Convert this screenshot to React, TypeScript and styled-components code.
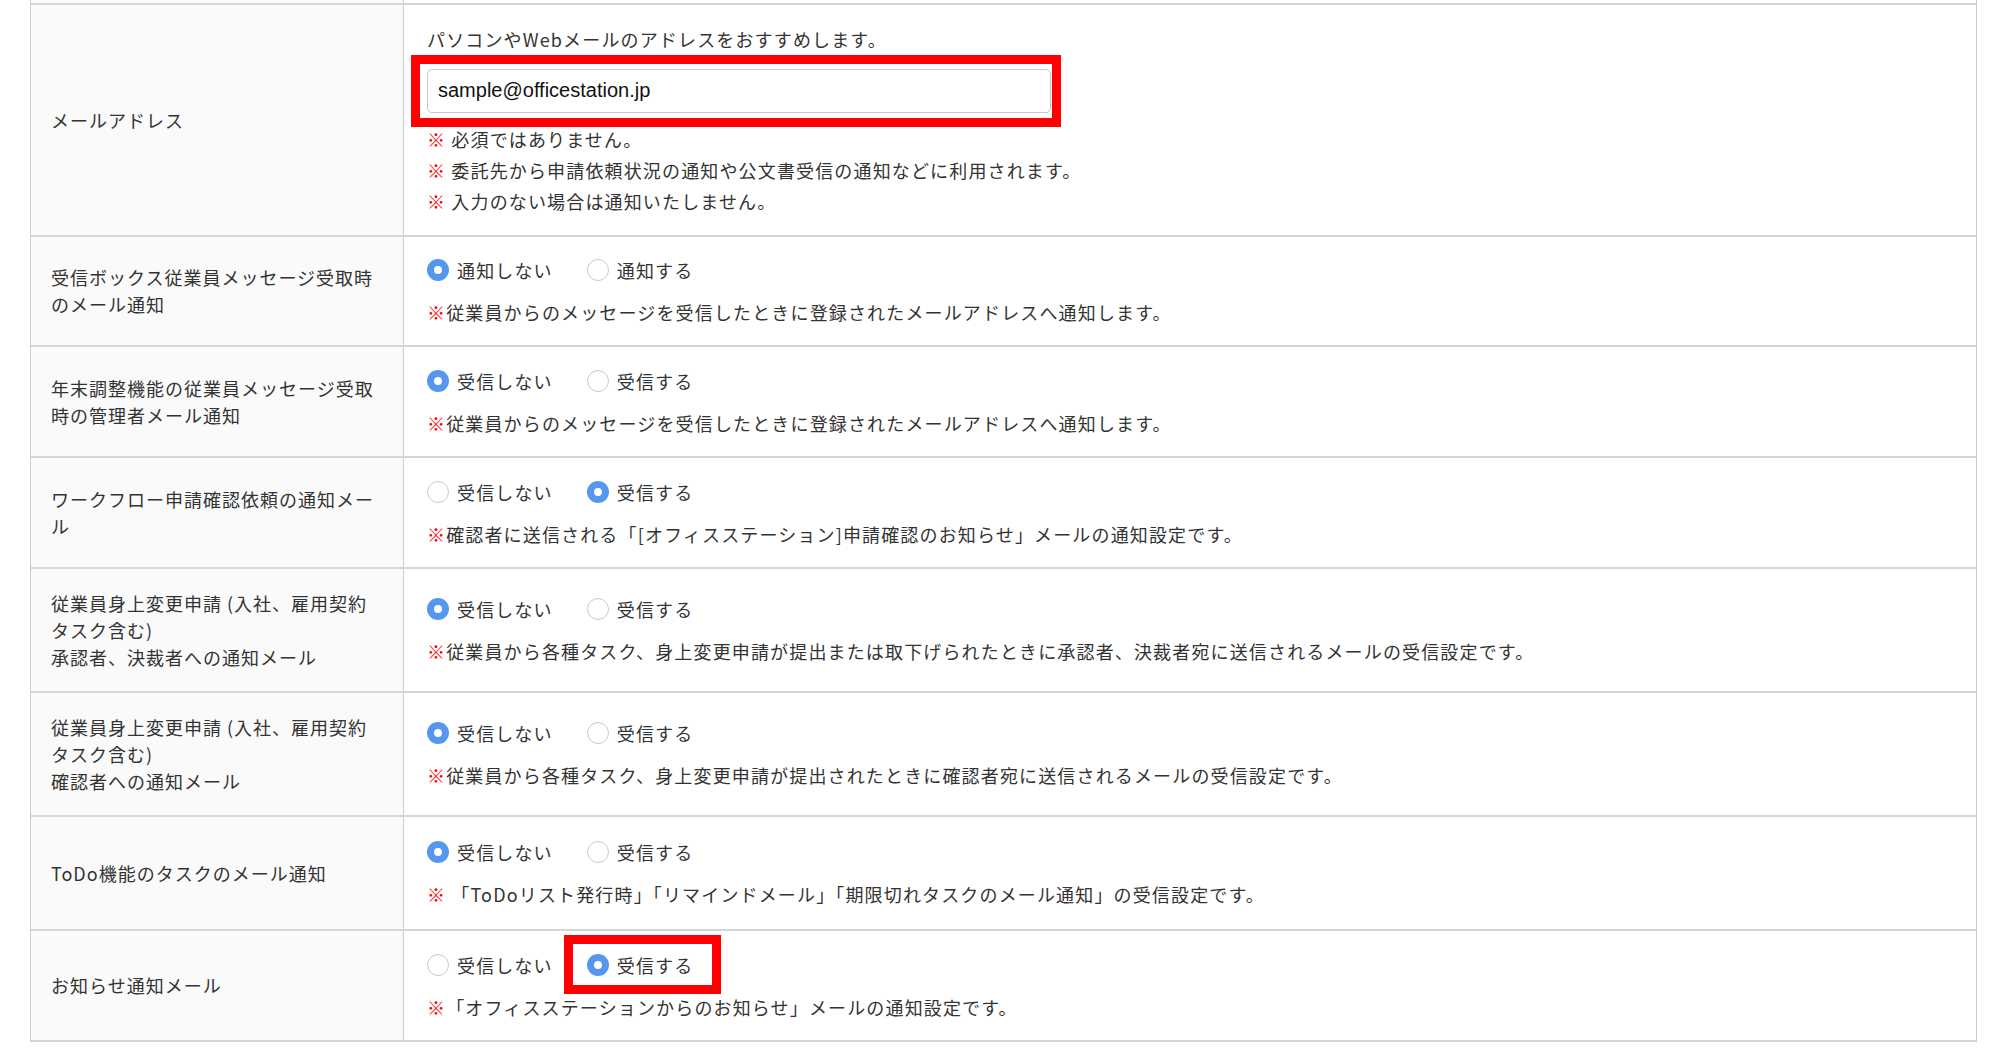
import React from 'react'
import styled, { createGlobalStyle } from 'styled-components'

const GlobalStyle = createGlobalStyle`
  html, body {
    margin: 0;
    padding: 0;
    background: #fff;
  }
  body {
    font-family: "Noto Sans CJK JP", "Noto Sans", sans-serif;
    color: #333;
  }
`

const Table = styled.div`
  margin-left: 30px;
  width: 1947px;
  box-sizing: border-box;
  border-left: 1px solid #cdcdcd;
  border-right: 1px solid #cdcdcd;
`

const Row = styled.div<{ $h: number }>`
  display: grid;
  grid-template-columns: 373px 1fr;
  height: ${(p) => p.$h}px;
  box-sizing: border-box;
  border-bottom: 2px solid #d6d6d6;
`

const Label = styled.div`
  display: flex;
  align-items: center;
  box-sizing: border-box;
  padding: 0 20px;
  background: #fafafa;
  border-right: 1px solid #cdcdcd;
  font-size: 18px;
  letter-spacing: 1px;
  line-height: 27px;
  white-space: pre-line;
`

const Content = styled.div`
  display: flex;
  flex-direction: column;
  justify-content: center;
  align-items: flex-start;
  padding-left: 23px;
  font-size: 18px;
  letter-spacing: 1.15px;
`

const Hint = styled.div`
  line-height: 30px;
`

const InputBox = styled.div`
  position: relative;
  margin-top: 15px;
  &::after {
    content: '';
    position: absolute;
    top: -14px;
    bottom: -14px;
    left: -16px;
    right: -10px;
    border: 9px solid #ff0000;
    pointer-events: none;
  }
`

const TextInput = styled.input`
  display: block;
  width: 624px;
  height: 44px;
  box-sizing: border-box;
  padding: 0 10px;
  border: 1px solid #c8c8c8;
  border-radius: 5px;
  font-family: "Liberation Sans", Arial, sans-serif;
  font-size: 20px;
  letter-spacing: 0;
  color: #111;
  background: #fff;
  outline: none;
`

const Notes = styled.div`
  margin-top: 11px;
`

const Note = styled.div<{ $lh?: number }>`
  line-height: ${(p) => p.$lh ?? 30}px;
  white-space: pre;
`

const Mark = styled.span`
  color: #ff0000;
  font-weight: 700;
`

const RadioGroup = styled.div`
  display: flex;
  align-items: center;
  height: 30px;
  margin-bottom: 12px;
`

const Option = styled.label<{ $highlight?: boolean }>`
  position: relative;
  display: inline-flex;
  align-items: center;
  gap: 8px;
  margin-right: 34px;
  line-height: 30px;
  ${(p) =>
    p.$highlight &&
    `
    &::after {
      content: '';
      position: absolute;
      top: -15px;
      bottom: -14px;
      left: -23px;
      right: -28px;
      border: 9px solid #ff0000;
      pointer-events: none;
    }
  `}
`

const RadioMark = styled.span<{ $checked: boolean }>`
  flex: none;
  width: 22px;
  height: 22px;
  box-sizing: border-box;
  border-radius: 50%;
  background: #fff;
  border: ${(p) => (p.$checked ? '7px solid #5597ef' : '1.5px solid #cacaca')};
`

type Setting = {
  label: string
  h: number
  options: [string, string]
  checked: 0 | 1
  note: string
  highlight?: boolean
}

const settings: Setting[] = [
  {
    label: '受信ボックス従業員メッセージ受取時のメール通知',
    h: 110,
    options: ['通知しない', '通知する'],
    checked: 0,
    note: '従業員からのメッセージを受信したときに登録されたメールアドレスへ通知します。',
  },
  {
    label: '年末調整機能の従業員メッセージ受取時の管理者メール通知',
    h: 111,
    options: ['受信しない', '受信する'],
    checked: 0,
    note: '従業員からのメッセージを受信したときに登録されたメールアドレスへ通知します。',
  },
  {
    label: 'ワークフロー申請確認依頼の通知メール',
    h: 111,
    options: ['受信しない', '受信する'],
    checked: 1,
    note: '確認者に送信される「[オフィスステーション]申請確認のお知らせ」メールの通知設定です。',
  },
  {
    label: '従業員身上変更申請 (入社、雇用契約タスク含む)\n承認者、決裁者への通知メール',
    h: 124,
    options: ['受信しない', '受信する'],
    checked: 0,
    note: '従業員から各種タスク、身上変更申請が提出または取下げられたときに承認者、決裁者宛に送信されるメールの受信設定です。',
  },
  {
    label: '従業員身上変更申請 (入社、雇用契約タスク含む)\n確認者への通知メール',
    h: 124,
    options: ['受信しない', '受信する'],
    checked: 0,
    note: '従業員から各種タスク、身上変更申請が提出されたときに確認者宛に送信されるメールの受信設定です。',
  },
  {
    label: 'ToDo機能のタスクのメール通知',
    h: 114,
    options: ['受信しない', '受信する'],
    checked: 0,
    note: ' 「ToDoリスト発行時」「リマインドメール」「期限切れタスクのメール通知」の受信設定です。',
  },
  {
    label: 'お知らせ通知メール',
    h: 111,
    options: ['受信しない', '受信する'],
    checked: 1,
    note: '「オフィスステーションからのお知らせ」メールの通知設定です。',
    highlight: true,
  },
]

export default function App() {
  return (
    <>
      <GlobalStyle />
      <Table>
        <Row $h={5}>
          <Label />
          <div />
        </Row>
        <Row $h={232}>
          <Label>メールアドレス</Label>
          <Content>
            <Hint>パソコンやWebメールのアドレスをおすすめします。</Hint>
            <InputBox>
              <TextInput type="text" defaultValue="sample@officestation.jp" />
            </InputBox>
            <Notes>
              <Note $lh={31}>
                <Mark>※</Mark> 必須ではありません。
              </Note>
              <Note $lh={31}>
                <Mark>※</Mark> 委託先から申請依頼状況の通知や公文書受信の通知などに利用されます。
              </Note>
              <Note $lh={31}>
                <Mark>※</Mark> 入力のない場合は通知いたしません。
              </Note>
            </Notes>
          </Content>
        </Row>
        {settings.map((s) => (
          <Row $h={s.h} key={s.label}>
            <Label>{s.label}</Label>
            <Content>
              <RadioGroup>
                {s.options.map((o, i) => (
                  <Option key={o} $highlight={s.highlight && i === 1}>
                    <RadioMark $checked={s.checked === i} />
                    {o}
                  </Option>
                ))}
              </RadioGroup>
              <Note>
                <Mark>※</Mark>
                {s.note}
              </Note>
            </Content>
          </Row>
        ))}
      </Table>
    </>
  )
}
